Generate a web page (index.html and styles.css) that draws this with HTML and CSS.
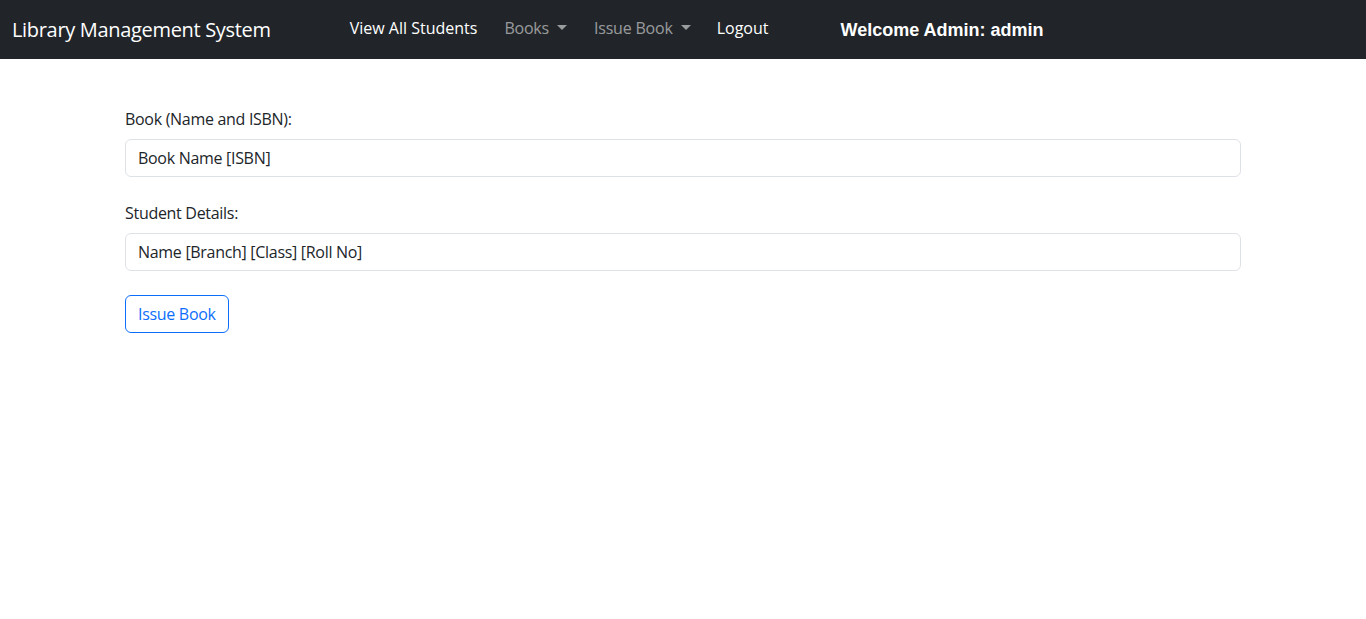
FILE: index.html
```html
<!DOCTYPE html>
<html lang="en">
<head>
<meta charset="utf-8">
<title>Issue Book</title>
<link rel="stylesheet" href="styles.css">
</head>
<body>
<nav class="navbar">
  <a class="brand" href="#">Library Management System</a>
  <ul class="nav">
    <li><a class="nav-link active wide" href="#">View All Students</a></li>
    <li><a class="nav-link dropdown wide" href="#">Books</a></li>
    <li><a class="nav-link dropdown wider" href="#">Issue Book</a></li>
    <li><a class="nav-link active" href="#">Logout</a></li>
  </ul>
  <span class="welcome">Welcome Admin: admin</span>
</nav>
<main class="content">
  <form class="form">
    <div class="field">
      <label class="label" for="book">Book (Name and ISBN):</label>
      <input class="input" id="book" type="text" value="Book Name [ISBN]">
    </div>
    <div class="field">
      <label class="label" for="student">Student Details:</label>
      <input class="input" id="student" type="text" value="Name [Branch] [Class] [Roll No]">
    </div>
    <button class="btn" type="button">Issue Book</button>
  </form>
</main>
</body>
</html>
```

FILE: styles.css
```css
* { box-sizing: border-box; }
html, body { margin: 0; padding: 0; }
body {
  font-family: "Open Sans", "Noto Sans", sans-serif;
  font-size: 16px;
  line-height: 24px;
  color: #212529;
  background: #fff;
}
.navbar {
  background: #212529;
  height: 59px;
  display: flex;
  align-items: center;
  padding: 0 12px;
}
.brand {
  color: #fff;
  font-size: 20px;
  line-height: 30px;
  text-decoration: none;
  margin-right: 71px;
  letter-spacing: -0.32px;
}
.nav {
  list-style: none;
  margin: 0;
  padding: 0;
  display: flex;
  margin-top: -4px;
}
.nav-link {
  display: block;
  padding: 8px;
  margin-right: 9px;
  color: rgba(255,255,255,.55);
  text-decoration: none;
  font-size: 16px;
  letter-spacing: 0;
}
.nav-link.wide { margin-right: 11px; }
.nav-link.wider { margin-right: 10px; }
.nav-link.active { color: #fff; }
.nav-link.dropdown { letter-spacing: -0.2px; }
.dropdown::after {
  content: "";
  display: inline-block;
  margin-left: 8px;
  vertical-align: 4px;
  border-top: 5px solid;
  border-left: 5px solid transparent;
  border-right: 5px solid transparent;
}
.welcome {
  margin-left: 55px;
  color: #fff;
  font-family: "Liberation Sans", Arial, sans-serif;
  font-weight: bold;
  font-size: 18px;
}
.content {
  padding-top: 48px;
}
.form {
  width: 1116px;
  margin: 0 auto;
}
.field { margin-bottom: 24px; }
.label {
  display: block;
  margin-bottom: 8px;
  letter-spacing: -0.3px;
}
.input {
  display: block;
  width: 100%;
  height: 38px;
  padding: 6px 12px;
  font: inherit;
  letter-spacing: -0.3px;
  color: #212529;
  border: 1px solid #dee2e6;
  border-radius: 6px;
  background: #fff;
}
.btn {
  height: 38px;
  padding: 6px 12px;
  font: inherit;
  letter-spacing: -0.3px;
  color: #0d6efd;
  background: #fff;
  border: 1px solid #0d6efd;
  border-radius: 6px;
}
```
